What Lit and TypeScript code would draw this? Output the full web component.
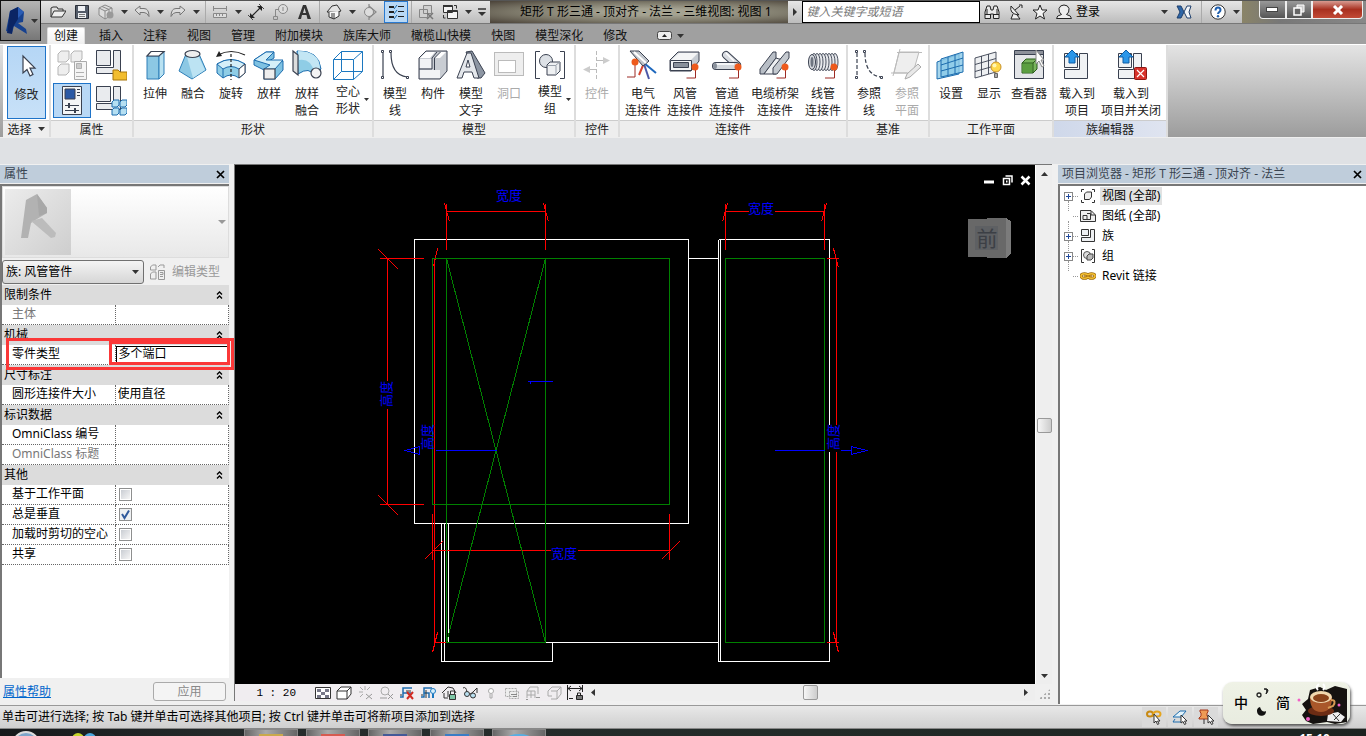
import { LitElement, html, css, svg, nothing, TemplateResult } from "lit";
import { customElement, property } from "lit/decorators.js";
import { classMap } from "lit/directives/class-map.js";

const INK = "#3a4150";

const ribbonIcons: Record<string, TemplateResult> = {
  cursor: svg`<path d="M12 6v17l4-3.500 3 6.500 3-1.600-3-6.300h5z" fill="#fff" stroke="${INK}" stroke-width="1.200"/>`,
  extrude: svg`<path d="M8 7h12v23H8z" fill="#8cc8e4" stroke="#2e7fb8"/><path d="M20 7l5-5v23l-5 5z" fill="#b9e2f2" stroke="#2e7fb8"/><path d="M8 7l4-4.500h13L20 7z" fill="#fff" stroke="${INK}" stroke-width="1.200"/>`,
  blend: svg`<path d="M9 5L2 22l13 8 14-9L22 5z" fill="#8cc8e4" stroke="#2e7fb8"/><path d="M10 8l6 21 12-8-6-13z" fill="#bce3f3"/><ellipse cx="15.500" cy="5" rx="7.500" ry="3.500" fill="#eee" stroke="${INK}" stroke-width="1.200"/>`,
  revolve: svg`<path d="M2 15Q16 6 30 15v9l-6 5q-8-6-16 0l-6-5z" fill="#8fcde6" stroke="#1c6cae"/><path d="M2 15Q16 6 30 15l-6 5q-8-5-16 0z" fill="#d5eff8" stroke="#1c6cae"/><path d="M8 20v9" stroke="#1c6cae"/><path d="M24 20l6-5v9l-6 5z" fill="#fff" stroke="${INK}"/><path d="M16 5v26" stroke="#222" stroke-width="1.200" stroke-dasharray="3 2"/><path d="M3 6Q16-1 30 6" fill="none" stroke="#222" stroke-width="1.200"/><path d="M1 8l3-6 3 5z" fill="#222"/>`,
  sweep: svg`<path d="M1 11l12-8h8v6l-5 3h14v9l-8 9H11v-9l-10-5z" fill="#7fc2e2" stroke="#1c6cae"/><path d="M1 11l12-8h8l-8 8h17l-8 9H11l6-4z" fill="#d5eff8" stroke="#1c6cae"/><path d="M11 20h11v10H11z" fill="#eee" stroke="${INK}" stroke-width="1.200"/>`,
  sweptBlend: svg`<path d="M6 2q22-1 24 18l-7 7Q19 17 7 25z" fill="#8fcde6" stroke="#1c6cae"/><path d="M7 2q21 0 22 17l-6 4Q20 9 8 11z" fill="#c3e6f4"/><path d="M2 2l5 4v20l-5-4z" fill="#ddd" stroke="${INK}" stroke-width="1.200"/><circle cx="25" cy="24" r="5" fill="#f4f4f4" stroke="${INK}" stroke-width="1.200"/>`,
  voidForm: svg`<path d="M1.500 10.500h20v20h-20zM9.500 2.500h21v20h-21zM1.500 10.500l8-8M21.500 10.500l9-8M21.500 30.500l9-8M1.500 30.500l8-8" fill="none" stroke="#1c78c0"/>`,
  modelLine: svg`<path d="M4 4v24M12 4q0 22 16 24" fill="none" stroke="${INK}" stroke-width="1.200"/><path d="M2.500 1.500h2v2h-2zM2.500 27.500h2v2h-2zM10.500 1.500h2v2h-2zM27.500 27.500h2v2h-2z" fill="#fff" stroke="${INK}"/>`,
  component: svg`<path d="M2 9l7-7h21v20l-7 8H2z" fill="#c9cdd3" stroke="${INK}"/><path d="M3 10h12v9H3zM3 21h20v8H3z" fill="#f2f3f5"/><path d="M3 9l6-6h9l-5 6zM18 9h5l6-6h-6z" fill="#fff"/><path d="M2 20h13V9l5-6M17.500 9v12M17.500 9l6-6" fill="none" stroke="${INK}"/>`,
  modelText: svg`<path d="M11 3l6-1 13 22-4 5h-4z" fill="#8d96a3" stroke="${INK}"/><path d="M2 29L12 4h4l8 25h-5l-2-6H9l-2 6zM11 18h4l-2-7z" fill="#e4e7eb" fill-rule="evenodd" stroke="${INK}"/>`,
  opening: svg`<rect x="1.500" y="3.500" width="29" height="23" fill="#eee" stroke="#bbb"/><rect x="5.500" y="11.500" width="17" height="12" fill="#fff" stroke="#bbb"/>`,
  modelGroup: svg`<path d="M6 2.500H1.500v27H6M26 2.500h4.500v27H26" fill="none" stroke="${INK}"/><circle cx="12" cy="12" r="6.500" fill="#dde1e6" stroke="${INK}"/><path d="M13 16l3-3h10v9l-4 4h-9z" fill="#eef0f2" stroke="${INK}"/><path d="M14 16.500h8V26M22 16l4-3" fill="none" stroke="#9aa1ab"/>`,
  control: svg`<path d="M15.500 2v28" stroke="#bbb" stroke-dasharray="4 2"/><path d="M15 11.500h9M8 20.500h8" stroke="#bbb"/><path d="M22 8l7 3.500-7 3.500zM9 17l-7 3.500L9 24z" fill="#ccc"/>`,
  elecConn: svg`<path d="M17 14l12 10" stroke="#1d67bd" stroke-width="2"/><path d="M17 15l5 15" stroke="#4b57a8" stroke-width="2"/><path d="M17 14l-5 12" stroke="#d5442f" stroke-width="2"/><path d="M3 2h9l10 10-6 5z" fill="#bfc4cb" stroke="${INK}"/><path d="M7 3l12 11" stroke="#fff" stroke-width="2"/><path d="M8 13v15H0" fill="none" stroke="#9c2a24"/><circle cx="8" cy="13" r="3.500" fill="#ee5a1c"/>`,
  ductConn: svg`<path d="M1 11l8-8h21v9l-8 10H1z" fill="#c6cbd2" stroke="${INK}"/><path d="M2 11l8-7h19l-7 7z" fill="#f4f5f6"/><path d="M1.500 11.500h21v10h-21z" fill="#f4f5f6" stroke="${INK}"/><path d="M4.500 13.500h15v5h-15z" fill="#8a919c" stroke="${INK}"/><path d="M26.500 19v10h-9" fill="none" stroke="#9c2a24"/><circle cx="26" cy="18" r="3.500" fill="#ee5a1c"/>`,
  pipeConn: svg`<path d="M15 6L26 16" stroke="${INK}" stroke-width="8" stroke-linecap="round"/><path d="M15 6L26 16" stroke="#d9dce1" stroke-width="6" stroke-linecap="round"/><path d="M5 17h20" stroke="${INK}" stroke-width="8" stroke-linecap="round"/><path d="M5 17h20" stroke="#d4d8dd" stroke-width="6" stroke-linecap="round"/><path d="M5 15h18M15 4l8 8" stroke="#fff" stroke-width="1.500"/><ellipse cx="4" cy="17" rx="2" ry="3" fill="#8a919c"/><path d="M27.500 20v9H18" fill="none" stroke="#9c2a24"/><circle cx="27" cy="18" r="3.500" fill="#ee5a1c"/>`,
  trayConn: svg`<path d="M1 20L14 3h3v6L5 25H1z" fill="#b8bec6" stroke="${INK}"/><path d="M5 25L17 9l3 1h6L17 25z" fill="#eef0f2" stroke="${INK}"/><path d="M14 19L27 3h3v6L18 25h-4z" fill="#c4c9cf" stroke="${INK}"/><path d="M26.500 19v10h-9" fill="none" stroke="#9c2a24"/><circle cx="26" cy="18" r="3.500" fill="#ee5a1c"/>`,
  conduitConn: svg`${[28, 25, 22, 19, 16, 13, 10, 7].map((x) => svg`<ellipse cx="${x}" cy="13" rx="3" ry="8.500" fill="#e8eaed" stroke="${INK}" stroke-width=".9"/>`)}<ellipse cx="5" cy="13" rx="3.500" ry="7.500" fill="#d6d9de" stroke="${INK}"/><ellipse cx="5" cy="13" rx="1.500" ry="5" fill="#6d7480"/><path d="M27.500 19v10H18" fill="none" stroke="#9c2a24"/><circle cx="27" cy="18" r="3.500" fill="#ee5a1c"/>`,
  refLine: svg`<path d="M4 4v24M12 4q0 22 16 24" fill="none" stroke="${INK}" stroke-width="1.200" stroke-dasharray="4 2"/><path d="M2.500 1.500h2v2h-2zM2.500 27.500h2v2h-2zM10.500 1.500h2v2h-2zM27.500 27.500h2v2h-2z" fill="#fff" stroke="${INK}"/>`,
  refPlane: svg`<path d="M8 3h20l-6 21H3z" fill="#eee" stroke="#bbb"/><path d="M6 3.500h25M9 0L2 27M0 24h16" stroke="#bbb"/><path d="M14 30l2-5 11-10 3 3-11 10z" fill="#e8e8e8" stroke="#aaa"/>`,
  setPlane: svg`<path d="M2 13l22-8v20L2 30z" fill="#a7d6ec" stroke="#1c6cae"/><path d="M6 10l22-7v20L6 28z" fill="#8ccbe8" fill-opacity=".8" stroke="#1c6cae"/><path d="M13 8v18M20 5.500v20M6 16l22-7M6 22l22-6" stroke="#1c6cae"/>`,
  showPlane: svg`<path d="M2 9l21-6v20L2 29zM8.500 7v20M15.500 5v20M2 15.500l21-6M2 22.500l21-6" fill="#eef0f2" stroke="${INK}" stroke-width=".9"/><circle cx="23" cy="18" r="5" fill="#ffd84a" stroke="#c8912a"/><circle cx="21.500" cy="16.500" r="2" fill="#fff6b5"/><path d="M21.500 24.500h3v4h-3z" fill="#aaa" stroke="#666"/>`,
  viewer: svg`<path d="M1.500 1.500h29v28h-29z" fill="#e3e5e8" stroke="${INK}"/><path d="M2 2h28v3H2z" fill="#8d919a"/><path d="M2 5.500h28" stroke="${INK}"/><path d="M9 14l4-4h11v10l-4 4H9z" fill="#79b55e" stroke="#2b5c1b"/><path d="M9.500 14.500h10v9h-10z" fill="#5b9e40"/><path d="M9 14h11v10M20 14l4-4" fill="none" stroke="#2b5c1b"/><path d="M23 1v14l3-3 3 6 2-1-3-6h3z" fill="#fff" stroke="#888"/>`,
  loadProj: svg`<path d="M3.500 4.500h13v14h-13zM18.500 4.500h8v25h-23v-9h15z" fill="#f0f2f4" stroke="${INK}"/><path d="M11 1l7 7h-4v6H8V8H4z" fill="#2b96e8" stroke="#0d5da5"/>`,
  loadClose: svg`<path d="M3.500 4.500h13v14h-13zM18.500 4.500h8v25h-23v-9h15z" fill="#f0f2f4" stroke="${INK}"/><path d="M11 1l7 7h-4v6H8V8H4z" fill="#2b96e8" stroke="#0d5da5"/><rect x="19.500" y="18.500" width="12" height="12" rx="1" fill="#d8322b" stroke="#8e1712"/><path d="M22 21l7 7M29 21l-7 7" stroke="#fff" stroke-width="1.200"/>`,
  typeProps: svg`<path d="M2 5l3-3h8v8l-3 3H2zM15 5l3-3h8v8l-3 3h-8zM2 18l3-3h8v8l-3 3H2z" fill="#eee" stroke="#b5b5b5"/><path d="M18.500 12.500h12v18h-12z" fill="#f5f5f5" stroke="#aaa"/><path d="M20.500 14.500h5v5h-5zM20 23.500h8M20 27.500h8" fill="#ccc" stroke="#b0b0b0"/>`,
  familyCat: svg`<path d="M1.500 1.500h14v15h-14zM18.500 1.500h7v23h-24v-6h17z" fill="#e9ebee" stroke="${INK}"/><path d="M18 21h5l2 2h7v8H18z" fill="#f2bd2e" stroke="#a8770a"/>`,
  properties: svg`<path d="M6.500 1.500h19v28h-19z" fill="#f4f5f6" stroke="${INK}"/><path d="M9 4h10v10H9z" fill="#2a59a5" stroke="${INK}"/><path d="M21 4.500h3M21 7.500h3M21 10.500h3M9 20.500h14M9 25.500h14" stroke="${INK}"/><path d="M13 18v5M19 23v5" stroke="${INK}" stroke-width="2"/>`,
  familyTypes: svg`<path d="M1.500 1.500h14v15h-14zM18.500 1.500h7v23h-24v-6h17z" fill="#e9ebee" stroke="${INK}"/><path d="M17 17l2-2h5v5l-2 2h-5zM25 17l2-2h5v5l-2 2h-5zM17 25l2-2h5v5l-2 2h-5zM25 25l2-2h5v5l-2 2h-5z" fill="#b5dff2" stroke="#1c6cae"/>`,
};

const smallIcons: Record<string, TemplateResult> = {
  open: svg`<path d="M1 13V4l2-1h4l1 2h5v2" fill="#ddd" stroke="#333"/><path d="M1 13L4 7h12l-4 6z" fill="#eee" stroke="#333"/>`,
  save: svg`<path d="M1.500 1.500h13v13h-13z" fill="#535b68" stroke="#2a2f38"/><path d="M4 2h7v5H4zM4 9h8v5H4z" fill="#eef0f3"/><path d="M5 10.500h6M5 12.500h6" stroke="#777"/>`,
  sync: svg`<path d="M1 4l6-3 7 3v7l-7 4-6-4zM1 4l6 3 7-3M7 7v8M4 2.500l7 3v8" fill="#ddd" stroke="#8a8a8a"/><circle cx="12" cy="11" r="3.500" fill="#999"/>`,
  undo: svg`<path d="M1 6l5-4v2.500h4q5 0 5 8-2-4-5-4H6V11z" fill="#dcdcdc" stroke="#777"/>`,
  redo: svg`<path d="M15 6l-5-4v2.500H6q-5 0-5 8 2-4 5-4h4V11z" fill="#dcdcdc" stroke="#777"/>`,
  measure: svg`<path d="M1 4.500h14M1.500 2v5M14.500 2v5" stroke="#888"/><path d="M1.500 9.500h13v4h-13zM4.500 10v2M7.500 10v2M10.500 10v2" fill="#ddd" stroke="#888"/>`,
  dim: svg`<path d="M3 13L13 3" stroke="#222" stroke-width="1.200"/><path d="M2 9v5h5zM9 2h5v5z" fill="#222"/><path d="M0 11l5 5M11 0l5 5" stroke="#444"/>`,
  tag: svg`<circle cx="11" cy="5" r="4.500" fill="#ddd" stroke="#888"/><path d="M11 3v4M7 5.500H3.500V12M1.500 12.500h4v3h-4z" fill="none" stroke="#888"/>`,
  textA: svg`<path d="M2 15L7 1h3l5 14h-3.500l-1-4H6l-1 4zM7 9h3L8.500 4z" fill="#333" fill-rule="evenodd"/>`,
  home: svg`<path d="M1 8l5-6 5-1 4 6-4 1z" fill="#e5e5e5" stroke="#333"/><path d="M3 8v5l5 2 5-3V7" fill="#f8f8f8" stroke="#333"/><path d="M8 15V9M6 9v5" stroke="#333"/>`,
  section: svg`<circle cx="7" cy="8" r="4.500" fill="#ddd" stroke="#888"/><path d="M7 2l7 6-7 6M7 0v3M7 13v3" fill="none" stroke="#888" stroke-width="1.200"/>`,
  thin: svg`<path d="M1 3h5M1 8h5M1 13h5" stroke="#222" stroke-width="2"/><path d="M10 2.500h6M10 7.500h6M10 12.500h6" stroke="#222"/><path d="M9 1L6 5M9 6l-3 4M9 11l-3 4" stroke="#1c6cae"/>`,
  closeHidden: svg`<path d="M5.500 1.500h8v8h-8zM1.500 5.500h8v8h-8z" fill="#d0d0d0" stroke="#888"/><path d="M9 9l6 6M15 9l-6 6" stroke="#777" stroke-width="1.500"/>`,
  switchWin: svg`<path d="M1.500 1.500h9v7h-9zM5.500 6.500h10v8h-10z" fill="#f4f4f4" stroke="#333"/><path d="M1 2h9M6 7h9" stroke="#333" stroke-width="2"/><path d="M12 1.500h2.500v3M1.500 11v3h2" fill="none" stroke="#333"/>`,
  binoc: svg`<path d="M1 14.500V8l2-6h3l1 4h2l1-4h3l2 6v6.500H9.500V10h-3v4.500z" fill="#e9e9e9" stroke="#222"/><path d="M1 10.500h5M10 10.500h5M3 5v5M13 5v5" stroke="#222"/>`,
  dish: svg`<path d="M3 2q-2 8 8 9zM5 10l-2 5h9l-3-4" fill="#eee" stroke="#222"/><path d="M7 6l5-4M11 1h3v3" fill="none" stroke="#222"/>`,
  star: svg`<path d="M8 1l2 5h5l-4 3.500 1.500 5.500L8 12l-4.500 3L5 9.500 1 6h5z" fill="#f4f4f4" stroke="#222"/>`,
  user: svg`<path d="M.5 14.500q0-3 5-4-3-2-2.500-6Q4 1 8 1t5 3.500q.5 4-2.500 6 5 1 5 4z" fill="#eee" stroke="#222"/>`,
  exchange: svg`<path d="M1 2h4l3 6-3 6H1l3-6z" fill="#2d66a8" stroke="#1e3f6c"/><path d="M15 2h-4L8 8l3 6h4l-2-6z" fill="#f1f4f8" stroke="#1e3f6c"/>`,
  help: svg`<circle cx="8" cy="8" r="7.200" fill="#fff" stroke="#333"/><path d="M5.500 6.500q0-3 2.500-3t2.500 2.500q0 1-1.200 2T8 10" fill="none" stroke="#1f5fae" stroke-width="2"/><circle cx="8" cy="12.200" r="1.200" fill="#1f5fae"/>`,
  views: svg`<path d="M4 1.500H1.500V4M12 1.500h2.500V4M1.500 12v2.500H4M14.500 12v2.500H12" fill="none" stroke="#333"/><path d="M4.500 6l2-2h5v5l-2 2.500h-5z" fill="#eee" stroke="#333"/>`,
  sheets: svg`<path d="M.5 2.500H11L15.500 7v6.500H.5z" fill="#eee" stroke="#333"/><path d="M3 7.500h4v4H3zM7 5.500h3.500v6H7M11 3v4h4" fill="none" stroke="#333"/>`,
  family: svg`<path d="M1.500 1.500h7v6h-7zM10.500 1.500h4v12h-13v-4h9z" fill="#eef0f2" stroke="#333"/>`,
  groups: svg`<path d="M4 1.500H1.500v13H4M12 1.500h2.500v13H12" fill="none" stroke="#333"/><circle cx="7" cy="7" r="3.500" fill="#ddd" stroke="#555"/><path d="M7 8l2-2h4v4l-2 2H7z" fill="#bbb" stroke="#444"/>`,
  link: svg`<ellipse cx="4.500" cy="8" rx="3.500" ry="2.300" stroke="#99680a" stroke-width="3"/><ellipse cx="11.500" cy="8" rx="3.500" ry="2.300" stroke="#99680a" stroke-width="3"/><ellipse cx="4.500" cy="8" rx="3.500" ry="2.300" stroke="#f5c033" stroke-width="1.500"/><ellipse cx="11.500" cy="8" rx="3.500" ry="2.300" stroke="#f5c033" stroke-width="1.500"/><path d="M4 8h8" stroke="#b67c10" stroke-width="1.500"/>`,
  detail: svg`<path d="M.5 2.500h15v11H.5z" fill="#fff" stroke="#333"/><path d="M2 4h4v3H2zM10 4h4v3h-4zM6 7h4v3H6zM2 10h4v3H2zM10 10h4v3h-4z" fill="#778"/>`,
  style: svg`<path d="M1 6l4-4h10v7l-4 5H1zM1 6h10v8M11 6l4-4" fill="#fff" stroke="#333"/>`,
  sun: svg`<path d="M2 7h4M8 1v4M3 2l3 3M13 2l-3 3M3 12l3-3" stroke="#aaa"/><path d="M9 9l6 5M15 9l-6 5" stroke="#999"/>`,
  shadow: svg`<circle cx="7" cy="6" r="4" fill="none" stroke="#aaa"/><path d="M2 13h7M10 9l5 5M15 9l-5 5" stroke="#999"/>`,
  crop: svg`<path d="M1 12h3V3h9M4 12V8h8" fill="none" stroke="#1c6cae" stroke-width="1.500"/><path d="M7 6h5M1 10h2" stroke="#333"/><path d="M8 7l6 7M14 7l-6 7" stroke="#d12b22" stroke-width="2"/>`,
  cropShow: svg`<path d="M1 12h3V3h8M4 8h5v5" fill="none" stroke="#1c6cae" stroke-width="1.500"/><path d="M6 5v8M1 10h2" stroke="#333"/><circle cx="13" cy="6" r="2.500" fill="#d9f0fb" stroke="#1c78c0"/><path d="M13 9v4" stroke="#1c78c0" stroke-width="2"/>`,
  lock3d: svg`<path d="M1 8l6-6 5 1 3 5M3 8v5h4M7 6v6" fill="none" stroke="#333"/><path d="M8.500 9.500h6v5h-6z" fill="#7dc6a5" stroke="#333"/><path d="M9.500 9V6h4v3" fill="none" stroke="#333"/>`,
  glasses: svg`<path d="M1 3q3-2 4 4M8 9q2-1 3-2l4-4v5" fill="none" stroke="#333"/><circle cx="5" cy="9" r="2.500" fill="#b9dff0" stroke="#333"/><circle cx="11" cy="10.500" r="2.500" fill="#b9dff0" stroke="#333"/>`,
  bulb: svg`<circle cx="8" cy="6" r="2.500" fill="#fff" stroke="#aaa"/><path d="M7 9v4h2V9" fill="none" stroke="#aaa"/>`,
  temp: svg`<path d="M1.500 3.500h11v8h-11zM5.500 6.500h9v7h-9z" fill="#eee" stroke="#aaa" stroke-dasharray="2 1"/><path d="M7 9.500h6M9 11.500h4" stroke="#888"/>`,
  analysis: svg`<path d="M2 6l3-4h8v7M2 6h8v7M2 6v7M6 6v7M2 10h8" fill="none" stroke="#aaa"/><path d="M11 12.500h4M1 14.500h2" stroke="#999"/>`,
  high: svg`<path d="M2 6l4-4h9v7l-4 5H5M5 6h6v8M11 6l4-4M2 6v5h4" fill="none" stroke="#aaa"/>`,
  constraint: svg`<path d="M1 3.500h14M.5 0v15M15.500 0v7M4 1L1 3.500 4 6M12 1l3 2.500L12 6" fill="none" stroke="#222"/><path d="M9.500 10.500h6v4h-6z" fill="#777" stroke="#222"/><path d="M10.500 10V8h3v2M2 13.500h4" fill="none" stroke="#222"/>`,
  selPlane: svg`<path d="M1 8l7-6h6l-5 6zM1 13h8M3 10L1 13" fill="#e3f3fb" stroke="#1c6cae"/><path d="M9 6v8l2-1.500 1.500 3 1.500-.8-1.500-2.700H15z" fill="#fff" stroke="#333"/>`,
  selLink: svg`<ellipse cx="4" cy="5" rx="3" ry="2.500" stroke="#c88a13" stroke-width="2"/><ellipse cx="11" cy="5" rx="3.500" ry="2.500" stroke="#e5a520" stroke-width="2"/><path d="M8 5v9l2-2 1.500 3.500 1.500-.8-1.500-2.700H14z" fill="#fff" stroke="#333"/>`,
  selPin: svg`<path d="M2 1h8v2l-1 1v3l2 2v1H1V9l2-2V4L2 3z" fill="#ee9a55" stroke="#a4371c"/><path d="M6 10v5" stroke="#333"/><path d="M10 6v8l2-1.500 1.500 3 1.500-.8-1.500-2.700H16z" fill="#fff" stroke="#333"/>`,
  typeEdit: svg`<path d="M.5 3l2-2H6v5H.5zM8 3l2-2h4v3M.5 10l2-2H6v7H.5z" fill="none" stroke="#999"/><path d="M8.500 6.500h6v9h-6zM10 8.500h3v2h-3M10 12.500h3" fill="none" stroke="#999"/>`,
};

@customElement("ui-icon")
class UiIcon extends LitElement {
  @property() name = "";
  static styles = css`
    :host { display: inline-flex; flex: none; }
    svg { display: block; }
  `;
  render() {
    const big = ribbonIcons[this.name];
    const n = big ? 32 : 16;
    return html`<svg width=${n} height=${n} viewBox="0 0 ${n} ${n}" fill="none" aria-hidden="true">${big ?? smallIcons[this.name]}</svg>`;
  }
}

interface Tool { icon: string; lines: string[]; off?: boolean; split?: boolean; }
interface Panel { title: string; tools: Tool[]; tinted?: boolean; }

const t = (icon: string, text: string, extra: Partial<Tool> = {}): Tool => ({ icon, lines: text.split("|"), ...extra });

const panels: Panel[] = [
  { title: "形状", tools: [t("extrude", "拉伸"), t("blend", "融合"), t("revolve", "旋转"), t("sweep", "放样"), t("sweptBlend", "放样|融合"), t("voidForm", "空心|形状", { split: true })] },
  { title: "模型", tools: [t("modelLine", "模型|线"), t("component", "构件"), t("modelText", "模型|文字"), t("opening", "洞口", { off: true }), t("modelGroup", "模型|组", { split: true })] },
  { title: "控件", tools: [t("control", "控件", { off: true })] },
  { title: "连接件", tools: [t("elecConn", "电气|连接件"), t("ductConn", "风管|连接件"), t("pipeConn", "管道|连接件"), t("trayConn", "电缆桥架|连接件"), t("conduitConn", "线管|连接件")] },
  { title: "基准", tools: [t("refLine", "参照|线"), t("refPlane", "参照|平面", { off: true })] },
  { title: "工作平面", tools: [t("setPlane", "设置"), t("showPlane", "显示"), t("viewer", "查看器")] },
  { title: "族编辑器", tinted: true, tools: [t("loadProj", "载入到|项目"), t("loadClose", "载入到|项目并关闭")] },
];

const tabs = ["创建", "插入", "注释", "视图", "管理", "附加模块", "族库大师", "橄榄山快模", "快图", "模型深化", "修改"];

interface Prop { label: string; kind: "text" | "check"; value?: string; on?: boolean; off?: boolean; boxed?: boolean; }
const groups: { title: string; props: Prop[] }[] = [
  { title: "限制条件", props: [{ label: "主体", kind: "text", off: true }] },
  { title: "机械", props: [{ label: "零件类型", kind: "text", value: "多个端口", boxed: true }] },
  { title: "尺寸标注", props: [{ label: "圆形连接件大小", kind: "text", value: "使用直径" }] },
  { title: "标识数据", props: [{ label: "OmniClass 编号", kind: "text" }, { label: "OmniClass 标题", kind: "text", off: true }] },
  { title: "其他", props: [{ label: "基于工作平面", kind: "check" }, { label: "总是垂直", kind: "check", on: true }, { label: "加载时剪切的空心", kind: "check" }, { label: "共享", kind: "check" }] },
];

const tree = [
  { icon: "views", label: "视图 (全部)", open: true, sel: true },
  { icon: "sheets", label: "图纸 (全部)" },
  { icon: "family", label: "族", open: true },
  { icon: "groups", label: "组", open: true },
  { icon: "link", label: "Revit 链接" },
];

const caret = html`<svg class="caret" width="7" height="4" viewBox="0 0 7 4" aria-hidden="true"><path d="M0 0h7L3.500 4z" fill="#333"/></svg>`;
const cross = html`<svg width="9" height="9" viewBox="0 0 9 9" aria-hidden="true"><path d="M1 1l7 7M8 1L1 8" stroke="#000" stroke-width="1.700"/></svg>`;
const chevrons = html`<svg width="7" height="8" viewBox="0 0 7 8" aria-hidden="true"><path d="M1 3.500L3.500 1 6 3.500M1 7.500L3.500 5 6 7.500" fill="none" stroke="#000" stroke-width="1.300"/></svg>`;

@customElement("app-root")
class AppRoot extends LitElement {
  static styles = css`
    :host {
      display: flex; flex-direction: column; height: 100vh; overflow: hidden; position: relative;
      background: #f0f0f0; color: #000;
      font: 12px/16px "Noto Sans", "Noto Sans CJK SC", sans-serif;
    }
    * { box-sizing: border-box; }
    button, input, select { font: inherit; color: inherit; margin: 0; padding: 0; border: 0; background: none; border-radius: 0; }
    button { display: flex; align-items: center; justify-content: center; white-space: nowrap; }
    .grow { flex: 1; }
    header { display: grid; grid-template-columns: 41px 1fr; grid-template-rows: 24px 20px; background: #a0a0a0; flex: none; }
    .app { grid-row: 1 / 3; height: 41px; border: 1px solid #111; background: linear-gradient(#b5b5b5, #777); gap: 3px; }
    .title { display: flex; border-top: 1px solid #555; border-bottom: 1px solid #777; background: linear-gradient(#e6e6e6, #bcbcbc); align-items: stretch; padding-left: 5px; min-width: 0; }
    .q { width: 24px; }
    .q.on { background: #b9d8f5; border: 1px solid #2a7ad1; margin-left: 2px; }
    .a { width: 12px; }
    .a.wide { width: 16px; }
    .sep { width: 6px; display: flex; justify-content: center; }
    .sep.far { width: 10px; }
    .sep::before { content: ""; width: 1px; background: #aaa; }
    .doc { flex: 296 1 0; text-align: center; line-height: 22px; padding-left: 14px; white-space: nowrap; overflow: hidden; background: radial-gradient(ellipse at 55% 50%, #a5a392 20%, #7d796a 60%, #4a4238); }
    .search { flex: 180 1 0; min-width: 80px; border: 1px solid #000; background: #fff; padding-left: 4px; font-style: italic; }
    .search::placeholder { color: #777; opacity: 1; }
    .go { width: 14px; background: linear-gradient(#e6e6e6, #bcbcbc); }
    .login { width: 96px; justify-content: space-between; padding-right: 4px; }
    .win { display: flex; width: 124px; padding: 0 3px 4px 17px; background: linear-gradient(90deg, #8a8468, #777 30%, #888); }
    .win button { flex: 1; border: 1px solid #eee; border-top: 0; background: linear-gradient(#999, #555); }
    .win button:last-child { flex: 2 1 0; background: linear-gradient(#d89a90, #a83020 50%, #c24a36); border-radius: 0 0 4px 0; }
    .win button:first-child { border-radius: 0 0 0 4px; }
    .tabs { display: flex; padding: 3px 0 0 6px; gap: 8px; }
    .tabs button { padding: 0 6px; height: 17px; color: #111; }
    .tabs button.on { background: linear-gradient(#fff, #f0f0f0); border: 1px solid #ddd; border-bottom: 0; border-radius: 2px 2px 0 0; }
    .tabs .min { gap: 5px; padding-left: 16px; }
    .ribbon { display: flex; gap: 2px; height: 94px; flex: none; padding-left: 3px; background: linear-gradient(#e4e4e4, #9c9c9c); border-top: 1px solid #fff; border-bottom: 1px solid #eee; }
    .panel { display: flex; flex-direction: column; background: #fff; box-shadow: 2px 0 #ddd; }
    .body { flex: 1; display: flex; padding: 1px 2px; }
    .body.first { padding: 1px 3px 1px 4px; }
    .cap { height: 17px; background: #eee; border-top: 1px solid #ccc; text-align: center; line-height: 17px; color: #222; }
    .cap.pick { display: flex; align-items: center; justify-content: center; gap: 6px; }
    .cap.tint { background: linear-gradient(90deg, #cfd8ea, #dfe4f0); }
    .tool { flex-direction: column; justify-content: flex-start; min-width: 38px; padding: 3px 3px 0; line-height: 17px; color: #222; }
    .tool .txt { padding-top: 4px; }
    .tool.off { color: #aaa; }
    .tool.split { width: 44px; position: relative; }
    .tool.split .txt { padding-top: 2px; }
    .tool.split .caret { position: absolute; right: 1px; bottom: 18px; width: 5px; height: 3px; }
    .modify { width: 39px; height: 73px; background: linear-gradient(#b5d6f5, #c8e1f8); border: 1px solid #1e73c8; }
    .pair { display: grid; grid-template-columns: 38px 38px; grid-template-rows: 37px 35px; gap: 0 1px; }
    .pair .on { background: #b9d8f5; border: 1px solid #1e73c8; }
    .options { height: 26px; flex: none; background: #dfe1e4; }
    main { flex: 1; display: flex; min-height: 0; background: #f0f0f0; }
    .side { display: flex; flex-direction: column; min-width: 0; min-height: 0; }
    .props { width: 229px; flex: none; }
    .bar { display: flex; align-items: center; justify-content: space-between; height: 18px; flex: none; margin-top: 1px; padding: 0 0 0 4px; background: #bfcddb; color: #3a4450; white-space: nowrap; }
    .bar button { width: 18px; height: 18px; }
    .frame { flex: 1; display: flex; flex-direction: column; min-height: 0; margin-top: 1px; border: 1px solid #777; border-width: 2px 0 0 2px; background: #fff; }
    .type { display: flex; height: 72px; flex: none; padding: 2px; align-items: center; justify-content: space-between; background: linear-gradient(#fff, #e8e8e8); border: 1px solid #ddd; }
    .pickrow { display: flex; height: 27px; flex: none; background: #f0f0f0; align-items: center; }
    .sel { width: 142px; height: 24px; display: flex; align-items: center; position: relative; }
    .sel select { appearance: none; width: 100%; height: 24px; padding: 0 18px 0 3px; border: 1px solid #707070; border-radius: 3px; background: linear-gradient(#f4f4f4, #d6d6d6); }
    .sel svg { position: absolute; right: 5px; pointer-events: none; }
    .edit { color: #999; gap: 6px; padding-left: 6px; }
    table { width: 100%; border-spacing: 0; table-layout: fixed; }
    td, th { height: 20px; padding: 0; font-weight: 400; text-align: left; white-space: nowrap; overflow: hidden; line-height: 18px; }
    .sec th { background: #dcdcdc; padding-left: 2px; }
    .sec div { display: flex; align-items: center; justify-content: space-between; padding-right: 6px; }
    .row th, .row td { border-bottom: 1px dotted #666; border-right: 1px dotted #666; }
    .row th { padding-left: 10px; vertical-align: top; line-height: 17px; }
    .row input[type="text"] { display: block; width: 100%; height: 17px; padding: 0 0 1px 2px; outline: 0; }
    .row .boxed { border: 1px solid #000; }
    .row.off { color: #777; }
    input[type="checkbox"] { appearance: none; display: block; width: 13px; height: 13px; margin-left: 3px; border: 1px solid #8e8f8f; background: linear-gradient(135deg, #c9cdd3, #f6f6f6) content-box #fff; padding: 1px; }
    input[type="checkbox"]:checked { background: url("data:image/svg+xml,%3Csvg xmlns='http://www.w3.org/2000/svg' viewBox='0 0 11 11'%3E%3Cpath d='M2 5l2.500 4L9 1.500' fill='none' stroke='%23305a9c' stroke-width='2'/%3E%3C/svg%3E") #eef0f2; }
    .foot { display: flex; height: 27px; flex: none; align-items: center; justify-content: space-between; padding: 0 3px; background: #f0f0f0; }
    .foot a { color: #0066cc; }
    .foot button { width: 73px; height: 19px; border: 1px solid #aaa; border-radius: 3px; background: #f4f4f4; color: #888; }
    .view { flex: 1; display: grid; grid-template-columns: 1fr 17px; grid-template-rows: 1fr 17px; min-width: 0; margin: 0 6px 4px 5px; border: 1px solid #777; border-width: 1px 0 0 1px; }
    .canvas { background: #000; min-height: 0; min-width: 0; overflow: hidden; position: relative; }
    .canvas svg.draw { display: block; width: 100%; height: 100%; }
    .canvas text { fill: #00f; font-size: 13px; text-anchor: middle; }
    .canvas .cube { fill: #3c3f45; font-size: 21px; }
    .ctl { position: absolute; top: 8px; right: 1px; display: flex; }
    .ctl button { width: 18px; height: 14px; }
    .vs { display: flex; flex-direction: column; align-items: center; justify-content: space-between; background: #eee; border-left: 1px solid #fff; padding: 6px 0 4px; }
    .thumb { width: 15px; height: 15px; border: 1px solid #999; border-radius: 2px; background: linear-gradient(90deg, #f6f6f6, #ccc); }
    .vbar { display: flex; align-items: center; min-width: 0; background: #f0edf0; }
    .scale { width: 77px; text-align: right; padding-right: 16px; font: 11px/16px "Liberation Mono", monospace; }
    .vbar .v { width: 21px; height: 16px; }
    .hs { flex: 1; display: flex; align-items: center; justify-content: space-between; background: #eee; padding: 0 5px; height: 17px; }
    .grip { background: radial-gradient(circle, #aaa 1px, transparent 1px) 0 0 / 4px 4px #eee; clip-path: polygon(90% 30%, 90% 90%, 20% 90%); }
    .browser { width: 308px; flex: none; padding-bottom: 1px; }
    .browser ul { list-style: none; margin: 0; padding: 0 0 0 2px; }
    .browser li { display: flex; align-items: center; height: 20px; position: relative; }
    .exp { width: 9px; height: 9px; border: 1px solid #888; background: #fff; margin-left: 2px; flex: none; }
    .stub { width: 9px; height: 0; margin-left: 2px; visibility: hidden; }
    .dots { width: 5px; border-top: 1px dotted #999; margin-right: 2px; }
    .node { margin-left: 4px; padding: 0 2px; line-height: 18px; }
    .node.sel-on { background: #e2e2e2; }
    .browser li:not(:last-child)::after { content: ""; position: absolute; left: 6px; top: 15px; height: 10px; border-left: 1px dotted #999; }
    .status { display: flex; align-items: center; justify-content: space-between; height: 24px; flex: none; border-top: 1px solid #999; border-bottom: 1px solid #888; background: linear-gradient(#e8e8e8, #cfcfcf); padding: 0 148px 0 2px; }
    .msg { width: 477px; overflow: hidden; white-space: nowrap; }
    .picks { display: flex; gap: 2px; }
    .picks button { width: 24px; height: 20px; background: #dadada; }
    .task { display: flex; height: 7px; flex: none; overflow: hidden; background: linear-gradient(90deg, #16191b, #262c2c 18%, #232b28 60%, #1c2320); color: #fff; padding-right: 36px; align-items: flex-start; }
    .orb { width: 28px; height: 28px; border-radius: 50%; background: #7ea5c9; border: 2px solid #ddd; margin: 2px 32px 0 12px; flex: none; }
    .dot { width: 12px; height: 12px; border-radius: 50%; background: #c7d62a; margin-top: 4px; flex: none; }
    .dot.b { background: #4aa7dd; margin-right: 148px; }
    .task .wnd { width: 54px; height: 14px; flex: none; margin-right: 8px; border: 1px solid #888; background: linear-gradient(90deg, #666, #aaa 40%, #666); display: flex; justify-content: center; padding-top: 4px; }
    .wnd i { width: 24px; height: 8px; }
    .wnd.sheet i { background: #d65a50; } .wnd.revit i { background: #445a98; } .wnd.blue i { background: #3a7dc5; } .wnd.globe i { background: #58aee2; border-radius: 50% 50% 0 0; } .wnd.folder i { background: #c9a94c; }
    .clock { line-height: 14px; padding-top: 3px; margin-left: auto; font-weight: 700; }
    .ime { position: absolute; right: 16px; bottom: 12px; width: 127px; height: 42px; border-radius: 9px; background: linear-gradient(#eff2e6, #e8ece0); box-shadow: 1px 2px 3px #555; display: flex; align-items: center; padding-left: 11px; font-weight: 500; font-size: 14px; overflow: hidden; gap: 7px; }
    .ime svg { display: block; flex: none; }
    .mark { position: absolute; border: 3px solid #fb3838; pointer-events: none; }
    .mark.outer { left: 6px; top: 338px; width: 228px; height: 32px; }
    .mark.inner { left: 109px; top: 341px; width: 121px; height: 24px; }
  `;

  private q(name: string, label: string, on = false) {
    return html`<button class=${classMap({ q: true, on })} aria-label=${label}><ui-icon name=${name}></ui-icon></button>`;
  }

  private arrow(label: string) {
    return html`<button class="a" aria-label=${label}>${caret}</button>`;
  }

  private header() {
    return html`<header>
      <button class="app" aria-label="应用程序菜单">
        <svg width="24" height="30" viewBox="0 0 24 30"><path d="M6 5l8-4 6 5-1 10-5 1 8 6 1 5-13-8-2 7-6-2z" fill="#16418f"/><path d="M6 5l8-4v12l-5 8-1 7-5-1z" fill="#0b2564"/><path d="M14 1l6 5-6 6z" fill="#2a5cb4"/></svg>${caret}
      </button>
      <div class="title">
        ${this.q("open", "打开")}${this.q("save", "保存")}${this.q("sync", "同步")}${this.arrow("同步选项")}
        ${this.q("undo", "放弃")}${this.arrow("放弃列表")}${this.q("redo", "重做")}${this.arrow("重做列表")}
        <span class="sep"></span>${this.q("measure", "测量")}${this.arrow("测量选项")}${this.q("dim", "对齐标注")}${this.q("tag", "标记")}${this.q("textA", "文字")}
        <span class="sep"></span>${this.q("home", "默认三维视图")}${this.arrow("三维选项")}${this.q("section", "剖面")}${this.q("thin", "细线", true)}
        <span class="sep"></span>${this.q("closeHidden", "关闭隐藏窗口")}${this.q("switchWin", "切换窗口")}${this.arrow("窗口列表")}
        <button class="a wide" aria-label="自定义"><svg width="8" height="8" viewBox="0 0 8 8"><path d="M0 1h8" stroke="#333" stroke-width="1.500"/><path d="M0 4h8L4 8z" fill="#333"/></svg></button>
        <span class="doc">矩形 T 形三通 - 顶对齐 - 法兰 - 三维视图: 视图 1</span>
        <button class="go" aria-label="展开"><svg width="4" height="8" viewBox="0 0 4 8"><path d="M0 0v8l4-4z" fill="#333"/></svg></button>
        <input class="search" type="text" aria-label="搜索" placeholder="键入关键字或短语">
        ${this.q("binoc", "查找")}${this.q("dish", "通讯中心")}${this.q("star", "收藏夹")}${this.q("user", "用户")}
        <button class="login">登录${caret}</button>
        ${this.q("exchange", "Exchange Apps")}<span class="sep far"></span>${this.q("help", "帮助")}${this.arrow("帮助选项")}
        <div class="win">
          <button aria-label="最小化"><svg width="12" height="5"><rect x=".5" y=".5" width="11" height="4" fill="#fff" stroke="#444"/></svg></button>
          <button aria-label="还原"><svg width="12" height="12" viewBox="0 0 12 12"><path d="M4 1h7v7H4z" fill="#ccc" stroke="#fff"/><path d="M1 4h7v7H1z" fill="#666" stroke="#fff" stroke-width="1.500"/></svg></button>
          <button aria-label="关闭"><svg width="12" height="10" viewBox="0 0 12 10"><path d="M2 1l8 8M10 1L2 9" stroke="#fff" stroke-width="3"/></svg></button>
        </div>
      </div>
      <nav class="tabs">
        ${tabs.map((x, i) => html`<button class=${classMap({ on: i === 0 })}>${x}</button>`)}
        <button class="min" aria-label="最小化功能区"><svg width="15" height="9" viewBox="0 0 15 9"><rect x=".5" y=".5" width="14" height="8" rx="2" fill="#eee" stroke="#444"/><path d="M5 6h5L7.500 3z" fill="#222"/></svg>${caret}</button>
      </nav>
    </header>`;
  }

  private ribbon() {
    return html`<section class="ribbon">
      <div class="panel"><div class="body first"><button class="tool modify"><ui-icon name="cursor"></ui-icon><span class="txt">修改</span></button></div>
        <div class="cap pick">选择 ${caret}</div></div>
      <div class="panel"><div class="body pair">
        ${[["typeProps", "类型属性"], ["familyCat", "族类别和族参数"], ["properties", "属性"], ["familyTypes", "族类型"]].map(([n, l]) => html`<button class=${classMap({ on: n === "properties" })} aria-label=${l}><ui-icon name=${n}></ui-icon></button>`)}
      </div><div class="cap">属性</div></div>
      ${panels.map((p) => html`<div class="panel"><div class="body">
        ${p.tools.map((x) => html`<button class=${classMap({ tool: true, off: !!x.off, split: !!x.split })} ?disabled=${x.off}>
          <ui-icon name=${x.icon}></ui-icon><span class="txt">${x.lines.map((l, i) => html`${i ? html`<br>` : nothing}${l}`)}</span>${x.split ? caret : nothing}</button>`)}
        </div><div class=${classMap({ cap: true, tint: !!p.tinted })}>${p.title}</div></div>`)}
    </section>`;
  }

  private prop(p: Prop, id: string) {
    const field = p.kind === "check"
      ? html`<input type="checkbox" id=${id} ?checked=${p.on}>`
      : html`<input type="text" id=${id} class=${classMap({ boxed: !!p.boxed })} .value=${p.value ?? ""} ?disabled=${p.off}>`;
    return html`<tr class=${classMap({ row: true, off: !!p.off })}><th scope="row"><label for=${id}>${p.label}</label></th><td>${field}</td></tr>`;
  }

  private properties() {
    return html`<aside class="side props">
      <div class="bar">属性<button aria-label="关闭属性">${cross}</button></div>
      <div class="frame">
        <div class="type">
          <svg width="66" height="66" viewBox="0 0 66 66"><defs><linearGradient id="g" x2="1" y2="1"><stop stop-color="#ececec"/><stop offset="1" stop-color="#cecece"/></linearGradient></defs><path d="M0 0h66v66H0z" fill="url(#g)"/><path d="M21 11l11-6 10 14v5l-10 6-6 4-3 15h-7z" fill="#b2b2b2"/><path d="M26 32l11-3 14 15-1 4-4 1z" fill="#bcbcbc"/><path d="M32 5l10 14v5l-8 3z" fill="#a8a8a8"/></svg>
          <svg width="8" height="4" viewBox="0 0 8 4"><path d="M0 0h8L4 4z" fill="#999"/></svg>
        </div>
        <div class="pickrow">
          <label class="sel"><select aria-label="族"><option>族: 风管管件</option></select>${caret}</label>
          <button class="edit" disabled><ui-icon name="typeEdit"></ui-icon>编辑类型</button>
        </div>
        <table>
          ${groups.map((g, gi) => html`<tr class="sec"><th colspan="2"><div>${g.title}${chevrons}</div></th></tr>${g.props.map((p, i) => this.prop(p, `p${gi}-${i}`))}`)}
        </table>
        <div class="grow"></div>
      </div>
      <div class="foot"><a href="#help">属性帮助</a><button disabled>应用</button></div>
    </aside>`;
  }

  private drawing() {
    return html`<svg class="draw" viewBox="235 165 800 519" shape-rendering="crispEdges" fill="none" role="img" aria-label="三维视图">
      <g transform="translate(.5 .5)">
      <g stroke="#fff"><path d="M414 239H688V523H414zM688 258H718M441 523V661H552V642M444 523V661M448 523V642M545 642H718M718 239H829V424M829 451V661H718V239M720 239V661"/></g>
      <g stroke="#f00"><path d="M446 203V249M545 203V249M446 211H545M444 203L449 221M543 203L548 221M379 258H423M378 249L398 269M387 258V380M387 408V504M379 504H423M378 495L398 515M434 258V642M437 248L433 266M437 632L432 652M433 642H445M432 550H550M577 550H669M432 513V559M669 513V559M424 559L442 541M661 559L679 541M725 203V249M824 203V249M725 211H748M774 211H824M727 203L722 221M826 203L821 221M826 258H838M833 248L838 267M836 258V424M836 451V642M826 642H838M833 632L838 652"/></g>
      <g stroke="#008000"><path d="M432 258H669V504H432zM446 258V642H545V258M446 258L545 642M545 258L446 642M725 258H824V642H725z"/></g>
      <g stroke="#00f"><path d="M435 450H496M405 450L419 446V454zM527 381H552M530 380V383M774 450H824M840 450H851M851 446L866 450L851 454z"/></g>
      </g>
      <text x="509" y="200">宽度</text><text x="761" y="213">宽度</text><text x="564" y="558">宽度</text>
      <text transform="translate(391 394) rotate(-90)">高度</text><text transform="translate(432 437) rotate(-90)">高度</text><text transform="translate(838 437) rotate(-90)">高度</text>
      <path d="M968 219l38-1v40l-38-1z" fill="#686868"/><path d="M1006 218l5 3v33l-5 4z" fill="#7b7b7b"/><path d="M975 226h23v24h-23z" fill="#5e6063"/>
      <text class="cube" x="987" y="246">前</text>
    </svg>`;
  }

  private view() {
    const tri = (d: string) => html`<svg width="7" height="7" viewBox="0 0 7 7" aria-hidden="true"><path d=${d} fill="#333"/></svg>`;
    const v = ["detail", "style", "sun", "shadow", "crop", "cropShow", "lock3d", "glasses", "bulb", "temp", "analysis", "high", "constraint"];
    const names = ["详细程度", "视觉样式", "日光路径", "阴影", "裁剪视图", "显示裁剪区域", "锁定三维视图", "临时隐藏", "显示隐藏图元", "临时视图属性", "分析模型", "高亮位移集", "显示约束"];
    return html`<section class="view">
      <div class="canvas">${this.drawing()}
        <div class="ctl">
          <button aria-label="最小化视图"><svg width="12" height="12"><path d="M1 8h10" stroke="#fff" stroke-width="3"/></svg></button>
          <button aria-label="还原视图"><svg width="11" height="11" viewBox="0 0 11 11"><path d="M3.500 1h6.500v6.500M1.500 3.500h6v6h-6z" fill="none" stroke="#fff" stroke-width="1.500"/><path d="M4 5.500h1.500v2H4z" fill="#fff"/></svg></button>
          <button aria-label="关闭视图"><svg width="11" height="11" viewBox="0 0 11 11"><path d="M1.500 1.500l8 8M9.500 1.500l-8 8" stroke="#fff" stroke-width="2.500"/></svg></button>
        </div>
      </div>
      <div class="vs">${tri("M0 5h7L3.500 1z")}<div class="thumb"></div>${tri("M0 1h7L3.500 5z")}</div>
      <div class="vbar"><span class="scale">1 : 20</span>
        ${v.map((n, i) => html`<button class="v" aria-label=${names[i]}><ui-icon name=${n}></ui-icon></button>`)}
        <div class="hs">${tri("M5 0v7L1 3.500z")}<div class="thumb"></div>${tri("M1 0v7l4-3.500z")}</div>
      </div>
      <div class="grip"></div>
    </section>`;
  }

  private browser() {
    return html`<aside class="side browser">
      <div class="bar">项目浏览器 - 矩形 T 形三通 - 顶对齐 - 法兰<button aria-label="关闭项目浏览器">${cross}</button></div>
      <div class="frame"><ul>
        ${tree.map((n) => html`<li>${n.open ? html`<svg class="exp" viewBox="0 0 7 7"><path d="M1 3.500h5M3.500 1v5" stroke="#224a9c"/></svg>` : html`<span class="stub"></span>`}<span class="dots"></span><ui-icon name=${n.icon}></ui-icon><span class=${classMap({ node: true, "sel-on": !!n.sel })}>${n.label}</span></li>`)}
      </ul></div>
    </aside>`;
  }

  render() {
    return html`${this.header()}${this.ribbon()}
      <div class="options"></div>
      <main>${this.properties()}${this.view()}${this.browser()}</main>
      <footer class="status">
        <span class="msg">单击可进行选择; 按 Tab 键并单击可选择其他项目; 按 Ctrl 键并单击可将新项目添加到选择</span>
        <div class="picks">${[["selLink", "选择链接"], ["selPlane", "选择基线图元"], ["selPin", "选择锁定图元"]].map(([n, l]) => html`<button aria-label=${l}><ui-icon name=${n}></ui-icon></button>`)}</div>
      </footer>
      <div class="task"><span class="orb"></span><span class="dot"></span><span class="dot b"></span>
        ${["folder", "sheet", "revit", "blue", "globe"].map((c) => html`<span class="wnd ${c}"><i></i></span>`)}
        <span class="clock">15:10</span></div>
      <div class="ime"><span>中</span>
        <svg width="14" height="32" viewBox="0 0 14 32"><circle cx="4" cy="8" r="2" fill="none" stroke="#222" stroke-width="1.300"/><path d="M9 2q4 0 2 5 2-2 2-4-1-2-4-1z" fill="#222" stroke="#222"/><path d="M5 20a4.500 4.500 0 1 0 6 4q-4 2-6-4z" fill="#111"/></svg>
        <span>简</span>
        <svg width="50" height="42" viewBox="0 0 50 42"><path d="M5 22l6-5 2-9 10-3 6 3 9-4 12 3v33l-12 2-8-2-14 2-7-3-4-6 4-5z" fill="#151210"/><path d="M31 32l10-2 7 5-4 5-14-1z" fill="#eee"/><path d="M36 32l6 7M43 32l-6 6" stroke="#333"/><ellipse cx="24" cy="29" rx="13" ry="5" fill="#6c2c14"/><path d="M13 15q0 15 11 15t11-15z" fill="#a9572a"/><ellipse cx="24" cy="15" rx="11" ry="6" fill="#f0d7ae"/><ellipse cx="24" cy="16" rx="8" ry="4" fill="#8a431b"/><path d="M34 18q6 0 2 6l-5 2" fill="none" stroke="#d79a55" stroke-width="2"/><path d="M21 8q-3-3 1-6M26 8q3-3 0-6" stroke="#fff" fill="none" stroke-width="2"/><circle cx="2" cy="18" r="1.500" fill="#f15fc5"/><circle cx="11" cy="37" r="2" fill="#f15fc5"/><circle cx="42" cy="23" r="1.500" fill="#f15fc5"/></svg>
      </div>
      <div class="mark outer"></div><div class="mark inner"></div>`;
  }
}
